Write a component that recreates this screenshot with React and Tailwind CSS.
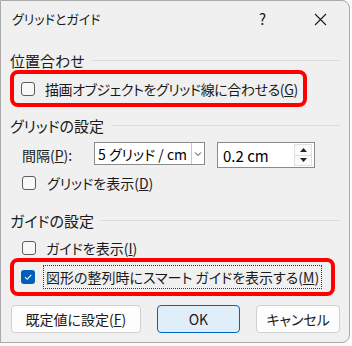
import React from "react";

const font = "font-['Noto_Sans_CJK_JP','Noto_Sans',sans-serif] [font-feature-settings:'palt']";

function Box({ checked }) {
  if (checked) {
    return (
      <div className="w-[14px] h-[14px] rounded-[3px] bg-[#005fb8] flex items-center justify-center shrink-0">
        <svg width="10" height="10" viewBox="0 0 10 10">
          <path d="M2 5.2 L4.2 7.3 L8.2 2.8" fill="none" stroke="white" strokeWidth="1.1" />
        </svg>
      </div>
    );
  }
  return <div className="w-[14px] h-[14px] rounded-[3px] border border-[#5d5d5d] bg-[#f8f8f8] shrink-0"></div>;
}

function Section({ title }) {
  return (
    <div className="flex items-center h-[20px] gap-[7px]">
      <span className="text-[15px] text-[#1a1a1a] leading-none">{title}</span>
      <div className="flex-1 h-px bg-[#dcdcdc]"></div>
    </div>
  );
}

export default function App() {
  return (
    <div className={`w-[352px] h-[346px] bg-[#fbfbfb] overflow-hidden ${font}`}>
      <div className="w-[350px] h-[343px] bg-[#f0f0f0] border border-[#a9a9a9] rounded-r-[8px]">
        {/* title bar */}
        <div className="h-[35px] flex items-center pl-[11px] relative">
          <span className="text-[13px] text-[#1a1a1a]">グリッドとガイド</span>
          <span className="absolute left-[258px] top-[7px] text-[15px] text-[#1a1a1a]">?</span>
          <svg className="absolute left-[313px] top-[12px]" width="13" height="13" viewBox="0 0 13 13">
            <path d="M1 1 L12 12 M12 1 L1 12" stroke="#1a1a1a" strokeWidth="1.1" />
          </svg>
        </div>

        <div className="px-[9px]">
          <div className="mt-[14px]">
            <Section title="位置合わせ" />
          </div>
          <div className="w-[297px] h-[37px] border-4 border-[#ff0000] rounded-[8px] flex items-center pl-[7px] gap-[10px]">
            <Box />
            <span className="whitespace-nowrap tracking-[-0.4px] text-[14px] text-[#1a1a1a] leading-none">
              描画オブジェクトをグリッド線に合わせる(<span className="underline">G</span>)
            </span>
          </div>

          <div className="mt-[8px]">
            <Section title="グリッドの設定" />
          </div>
          <div className="mt-[7px] h-[26px] flex items-center">
            <span className="w-[84px] pl-[12px] text-[14px] text-[#1a1a1a] leading-none">
              間隔(<span className="underline">P</span>):
            </span>
            <div className="w-[111px] h-[23px] self-start bg-white border border-[#8a8a8a] flex items-center pl-[3px]">
              <span className="flex-1 whitespace-nowrap text-[14px] text-[#000] leading-none">5 グリッド / cm</span>
              <div className="w-px h-full bg-[#c8c8c8]"></div>
              <svg className="mx-[2px]" width="8" height="8" viewBox="0 0 8 8">
                <path d="M1 2.5 L4 5.5 L7 2.5" fill="none" stroke="#333" strokeWidth="1" />
              </svg>
            </div>
            <div className="ml-[12px] w-[98px] h-[26px] bg-white border border-[#8a8a8a] flex items-center pl-[5px]">
              <span className="flex-1 text-[15px] text-[#000] leading-none">0.2 cm</span>
              <div className="w-[18px] h-[22px] mr-[2px] flex flex-col border border-[#e0e0e0] bg-[#fafafa]">
                <div className="flex-1 flex items-center justify-center border-b border-[#dcdcdc]">
                  <svg width="7" height="4" viewBox="0 0 7 4"><path d="M0 4 L3.5 0 L7 4 Z" fill="#222" /></svg>
                </div>
                <div className="flex-1 flex items-center justify-center">
                  <svg width="7" height="4" viewBox="0 0 7 4"><path d="M0 0 L3.5 4 L7 0 Z" fill="#222" /></svg>
                </div>
              </div>
            </div>
          </div>
          <div className="mt-[5px] h-[20px] flex items-center pl-[12px] gap-[11px]">
            <Box />
            <span className="text-[14px] text-[#1a1a1a] leading-none">
              グリッドを表示(<span className="underline">D</span>)
            </span>
          </div>

          <div className="mt-[17px]">
            <Section title="ガイドの設定" />
          </div>
          <div className="mt-[8px] h-[20px] flex items-center pl-[12px] gap-[10px]">
            <Box />
            <span className="text-[14px] text-[#1a1a1a] leading-none">
              ガイドを表示(<span className="underline">I</span>)
            </span>
          </div>
          <div className="w-[325px] h-[38px] border-4 border-[#ff0000] rounded-[8px] flex items-center pl-[7px] gap-[8px]">
            <Box checked />
            <span className="whitespace-nowrap px-[2px] py-[4px] border border-dotted border-[#333] text-[14px] text-[#1a1a1a] leading-none">
              図形の整列時にスマート ガイドを表示する(<span className="underline">M</span>)
            </span>
          </div>

          <div className="mt-[9px] flex items-center pl-[1px]">
            <button className="w-[130px] h-[28px] bg-[#fdfdfd] border border-[#d0d0d0] rounded-[4px] text-[14px] text-[#1a1a1a]">
              既定値に設定(<span className="underline">F</span>)
            </button>
            <button className="ml-[16px] w-[84px] h-[28px] bg-[#e0eef9] border border-[#0067c0] rounded-[4px] text-[14px] text-[#1a1a1a]">
              OK
            </button>
            <button className="ml-[16px] w-[84px] h-[28px] bg-[#fdfdfd] border border-[#d0d0d0] rounded-[4px] text-[14px] text-[#1a1a1a]">
              キャンセル
            </button>
          </div>
        </div>
      </div>
    </div>
  );
}
